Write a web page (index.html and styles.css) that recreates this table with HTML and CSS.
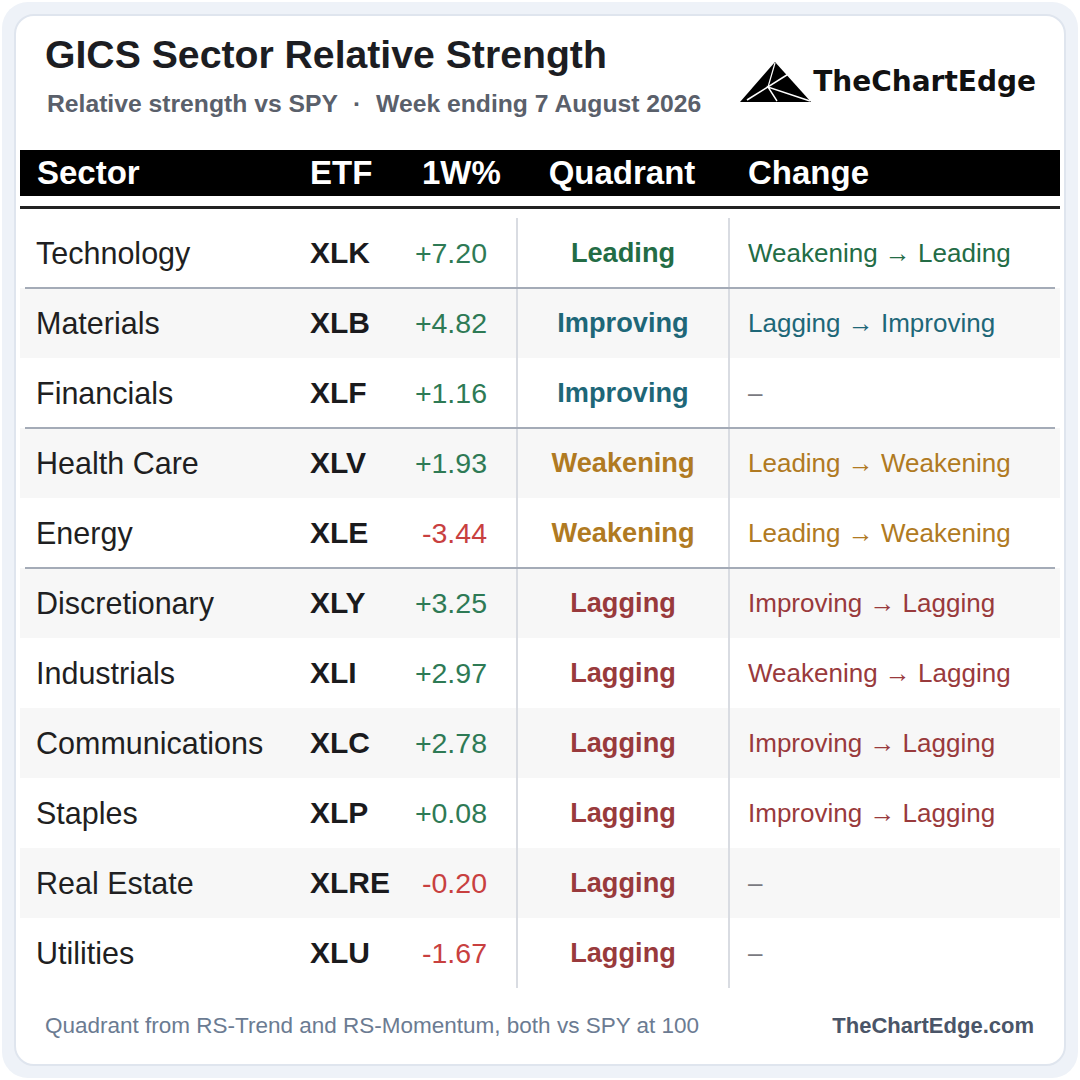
FILE: index.html
```html
<!DOCTYPE html>
<html lang="en">
<head>
<meta charset="utf-8">
<title>GICS Sector Relative Strength</title>
<link rel="stylesheet" href="styles.css">
</head>
<body>
<div class="frame">
  <div class="card">
    <header class="top">
      <div class="titles">
        <h1 class="title">GICS Sector Relative Strength</h1>
        <p class="subtitle">Relative strength vs SPY<span class="dot">·</span>Week ending 7 August 2026</p>
      </div>
      <div class="logo">
        <svg class="logo-mark" viewBox="0 0 72 40" width="72" height="40" aria-hidden="true">
          <polygon points="0,40 35,0 71,40" fill="#000"/>
          <polyline points="7,38 50,11" fill="none" stroke="#fff" stroke-width="1.6"/>
          <polyline points="35,1 28,25" fill="none" stroke="#fff" stroke-width="1.2"/>
          <polyline points="37,39 28,25 70,39" fill="none" stroke="#fff" stroke-width="1.4"/>
        </svg>
        <span class="logo-text">TheChartEdge</span>
      </div>
    </header>

    <div class="table">
      <div class="thead">
        <div class="th c-sector">Sector</div>
        <div class="th c-etf">ETF</div>
        <div class="th c-chg">1W%</div>
        <div class="th c-quad">Quadrant</div>
        <div class="th c-change">Change</div>
      </div>
      <div class="rule"></div>
      <div class="tbody">
        <div class="row">
          <div class="td c-sector">Technology</div>
          <div class="td c-etf">XLK</div>
          <div class="td c-chg pos">+7.20</div>
          <div class="td c-quad q-lead">Leading</div>
          <div class="td c-change q-lead">Weakening → Leading</div>
        </div>
        <div class="row alt sep">
          <div class="td c-sector">Materials</div>
          <div class="td c-etf">XLB</div>
          <div class="td c-chg pos">+4.82</div>
          <div class="td c-quad q-imp">Improving</div>
          <div class="td c-change q-imp">Lagging → Improving</div>
        </div>
        <div class="row">
          <div class="td c-sector">Financials</div>
          <div class="td c-etf">XLF</div>
          <div class="td c-chg pos">+1.16</div>
          <div class="td c-quad q-imp">Improving</div>
          <div class="td c-change none">–</div>
        </div>
        <div class="row alt sep">
          <div class="td c-sector">Health Care</div>
          <div class="td c-etf">XLV</div>
          <div class="td c-chg pos">+1.93</div>
          <div class="td c-quad q-weak">Weakening</div>
          <div class="td c-change q-weak">Leading → Weakening</div>
        </div>
        <div class="row">
          <div class="td c-sector">Energy</div>
          <div class="td c-etf">XLE</div>
          <div class="td c-chg neg">-3.44</div>
          <div class="td c-quad q-weak">Weakening</div>
          <div class="td c-change q-weak">Leading → Weakening</div>
        </div>
        <div class="row alt sep">
          <div class="td c-sector">Discretionary</div>
          <div class="td c-etf">XLY</div>
          <div class="td c-chg pos">+3.25</div>
          <div class="td c-quad q-lag">Lagging</div>
          <div class="td c-change q-lag">Improving → Lagging</div>
        </div>
        <div class="row">
          <div class="td c-sector">Industrials</div>
          <div class="td c-etf">XLI</div>
          <div class="td c-chg pos">+2.97</div>
          <div class="td c-quad q-lag">Lagging</div>
          <div class="td c-change q-lag">Weakening → Lagging</div>
        </div>
        <div class="row alt">
          <div class="td c-sector">Communications</div>
          <div class="td c-etf">XLC</div>
          <div class="td c-chg pos">+2.78</div>
          <div class="td c-quad q-lag">Lagging</div>
          <div class="td c-change q-lag">Improving → Lagging</div>
        </div>
        <div class="row">
          <div class="td c-sector">Staples</div>
          <div class="td c-etf">XLP</div>
          <div class="td c-chg pos">+0.08</div>
          <div class="td c-quad q-lag">Lagging</div>
          <div class="td c-change q-lag">Improving → Lagging</div>
        </div>
        <div class="row alt">
          <div class="td c-sector">Real Estate</div>
          <div class="td c-etf">XLRE</div>
          <div class="td c-chg neg">-0.20</div>
          <div class="td c-quad q-lag">Lagging</div>
          <div class="td c-change none">–</div>
        </div>
        <div class="row">
          <div class="td c-sector">Utilities</div>
          <div class="td c-etf">XLU</div>
          <div class="td c-chg neg">-1.67</div>
          <div class="td c-quad q-lag">Lagging</div>
          <div class="td c-change none">–</div>
        </div>
      </div>
    </div>

    <footer class="foot">
      <span class="foot-note">Quadrant from RS-Trend and RS-Momentum, both vs SPY at 100</span>
      <span class="foot-brand">TheChartEdge.com</span>
    </footer>
  </div>
</div>
</body>
</html>
```

FILE: styles.css
```css
* { box-sizing: border-box; }

html, body {
  margin: 0;
  padding: 0;
  background: #ffffff;
}

body {
  width: 1080px;
  height: 1080px;
  font-family: "Liberation Sans", Arial, sans-serif;
  color: #1c1d22;
}

.frame {
  margin: 2px;
  width: 1076px;
  height: 1076px;
  background: #eef2f8;
  border-radius: 26px;
  padding: 12px;
}

.card {
  width: 1052px;
  height: 1052px;
  background: #ffffff;
  border: 2px solid #dfe5ee;
  border-radius: 20px;
  display: flex;
  flex-direction: column;
}

/* header */
.top {
  display: flex;
  justify-content: space-between;
  align-items: flex-start;
  padding: 16px 28px 0 29px;
  height: 134px;
}

.title {
  margin: 0;
  font-size: 39.2px;
  line-height: 46px;
  font-weight: 700;
  color: #1c1d22;
}

.subtitle {
  margin: 11px 0 0 2px;
  font-size: 24.7px;
  line-height: 30px;
  font-weight: 700;
  color: #5a606b;
}

.dot {
  padding: 0 15px;
}

.logo {
  display: flex;
  align-items: center;
  margin-top: 30px;
}

.logo-mark {
  display: block;
  margin-right: 1px;
}

.logo-text {
  font-family: "DejaVu Sans", "Open Sans", sans-serif;
  font-weight: 700;
  font-size: 28px;
  line-height: 40px;
  color: #111111;
  letter-spacing: 0;
}

/* table */
.table {
  margin: 0 4px;
}

.thead,
.row {
  display: grid;
  grid-template-columns: 273px 112px 111px 212px 332px;
}

.thead {
  height: 46px;
  background: #000000;
  color: #ffffff;
  align-items: center;
}

.th {
  font-size: 33px;
  font-weight: 700;
  line-height: 46px;
  padding-left: 17px;
}

.th.c-quad {
  text-align: center;
  padding-left: 0;
}

.th.c-change {
  padding-left: 20px;
}

.rule {
  margin-top: 10px;
  height: 3px;
  background: #222222;
}

.tbody {
  padding-top: 9px;
}

.row {
  position: relative;
  height: 70px;
  align-items: stretch;
}

.row.alt {
  background: #f7f7f7;
}

.row.sep::before {
  content: "";
  position: absolute;
  left: 5px;
  right: 5px;
  top: -1px;
  height: 2px;
  background: #a4abb7;
}

.td {
  display: flex;
  align-items: center;
  line-height: 1;
}

.td.c-sector {
  padding-left: 16px;
  font-size: 30.5px;
  color: #1f1f22;
}

.td.c-etf {
  padding-left: 17px;
  font-size: 30px;
  font-weight: 700;
  color: #1a1a1d;
}

.td.c-chg {
  justify-content: flex-end;
  padding-right: 29px;
  font-size: 28.5px;
}

.td.c-quad {
  justify-content: center;
  border-left: 2px solid #d9dce2;
  font-size: 27.2px;
  font-weight: 700;
}

.td.c-change {
  border-left: 2px solid #d9dce2;
  padding-left: 18px;
  font-size: 26px;
}

.pos { color: #2e7a55; }
.neg { color: #c8403f; }

.q-lead { color: #236c45; }
.q-imp { color: #1e6778; }
.q-weak { color: #b07a22; }
.q-lag { color: #993a3c; }
.none { color: #7a7a80; }

/* footer */
.foot {
  flex: 1;
  display: flex;
  justify-content: space-between;
  align-items: center;
  padding: 0 30px 0 29px;
}

.foot-note {
  font-size: 22.5px;
  color: #6b7b92;
}

.foot-brand {
  font-size: 22px;
  font-weight: 700;
  color: #4a5568;
}
```
